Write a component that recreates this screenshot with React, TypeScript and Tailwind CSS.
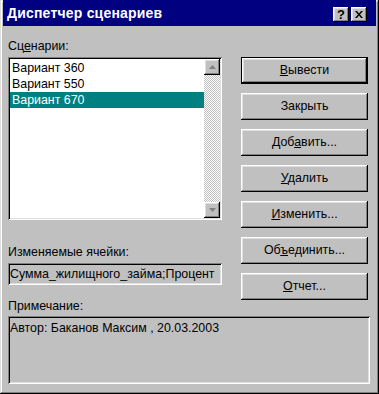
import React from 'react';

const raised =
  'shadow-[inset_-1px_-1px_#000,inset_1px_1px_#fff,inset_-2px_-2px_#808080,inset_2px_2px_#dfdfdf]';
const sunken =
  'shadow-[inset_1px_1px_#808080,inset_-1px_-1px_#fff,inset_2px_2px_#000,inset_-2px_-2px_#dfdfdf]';

function Btn({ children, isDefault = false }: { children: React.ReactNode; isDefault?: boolean }) {
  if (isDefault) {
    return (
      <div className="h-[27px] border border-black">
        <div className={`h-full flex items-center justify-center ${raised}`}>{children}</div>
      </div>
    );
  }
  return <div className={`h-[27px] flex items-center justify-center ${raised}`}>{children}</div>;
}

function ScrollArrow({ down = false }: { down?: boolean }) {
  return (
    <div className={`w-[16px] h-[16px] bg-[#c0c0c0] flex items-center justify-center ${raised}`}>
      <svg width="7" height="4" viewBox="0 0 7 4">
        <path d={down ? 'M0 0h7L3.5 4z' : 'M3.5 0L7 4H0z'} fill="#808080" />
      </svg>
    </div>
  );
}

const items = ['Вариант 360', 'Вариант 550', 'Вариант 670'];

export default function App() {
  return (
    <div
      className={`w-[379px] h-[394px] bg-[#c0c0c0] text-black text-[12.4px] flex flex-col shadow-[inset_-1px_-1px_#000,inset_1px_1px_#dfdfdf,inset_-2px_-2px_#808080,inset_2px_2px_#fff] px-[3px]`}
      style={{ fontFamily: '"Liberation Sans", Arial, sans-serif' }}
    >
      {/* title bar */}
      <div className="h-[26px] bg-[#000080] flex items-center justify-between pl-[4px] pr-[9px]">
        <span className="text-white font-bold text-[14px] tracking-[0.2px]">Диспетчер сценариев</span>
        <div className="flex gap-[2px] pt-[3px]">
          <div className={`w-[16px] h-[15px] bg-[#c0c0c0] flex items-center justify-center font-bold text-[13px] leading-none ${raised}`}>
            ?
          </div>
          <div className={`w-[16px] h-[15px] bg-[#c0c0c0] flex items-center justify-center ${raised}`}>
            <svg width="8" height="7" viewBox="0 0 8 7">
              <path d="M0 0h2l2 2.5L6 0h2L5 3.5 8 7H6L4 4.5 2 7H0l3-3.5z" fill="#000" />
            </svg>
          </div>
        </div>
      </div>

      <div className="flex pt-[12px] px-[5px]">
        {/* left column */}
        <div className="w-[214px] flex flex-col">
          <div className="h-[19px] leading-[16px]">
            Сц<span className="underline">е</span>нарии:
          </div>
          <div className={`h-[163px] bg-white p-[2px] flex ${sunken}`}>
            <div className="flex-1 flex flex-col pt-[1px]">
              {items.map((t, i) => (
                <div
                  key={t}
                  className={`h-[16px] leading-[16px] pl-[2px] ${i === 2 ? 'bg-[#008080] text-white' : ''}`}
                >
                  {t}
                </div>
              ))}
            </div>
            <div className="w-[16px] flex flex-col [background:repeating-conic-gradient(#c0c0c0_0_25%,#fff_0_50%)_0_0/2px_2px]">
              <ScrollArrow />
              <div className="flex-1" />
              <ScrollArrow down />
            </div>
          </div>
          <div className="h-[19px] leading-[16px] mt-[24px]">Изменяемые ячейки:</div>
          <div className={`h-[22px] flex items-center px-[2px] whitespace-nowrap overflow-hidden ${sunken}`}>
            Сумма_жилищного_займа;Процент
          </div>
          <div className="h-[18px] leading-[16px] mt-[13px]">Примечание:</div>
        </div>

        {/* right column */}
        <div className="w-[127px] ml-[19px] pt-[19px] flex flex-col gap-[9px]">
          <Btn isDefault>
            <span><span className="underline">В</span>ывести</span>
          </Btn>
          <Btn>Закрыть</Btn>
          <Btn>
            <span>Доб<span className="underline">а</span>вить...</span>
          </Btn>
          <Btn>
            <span><span className="underline">У</span>далить</span>
          </Btn>
          <Btn>
            <span><span className="underline">И</span>зменить...</span>
          </Btn>
          <Btn>
            <span>Об<span className="underline">ъ</span>единить...</span>
          </Btn>
          <Btn>
            <span><span className="underline">О</span>тчет...</span>
          </Btn>
        </div>
      </div>

      <div className="px-[5px]">
        <div className={`h-[68px] w-[362px] px-[2px] pt-[3px] ${sunken}`}>Автор: Баканов Максим , 20.03.2003</div>
      </div>
    </div>
  );
}
